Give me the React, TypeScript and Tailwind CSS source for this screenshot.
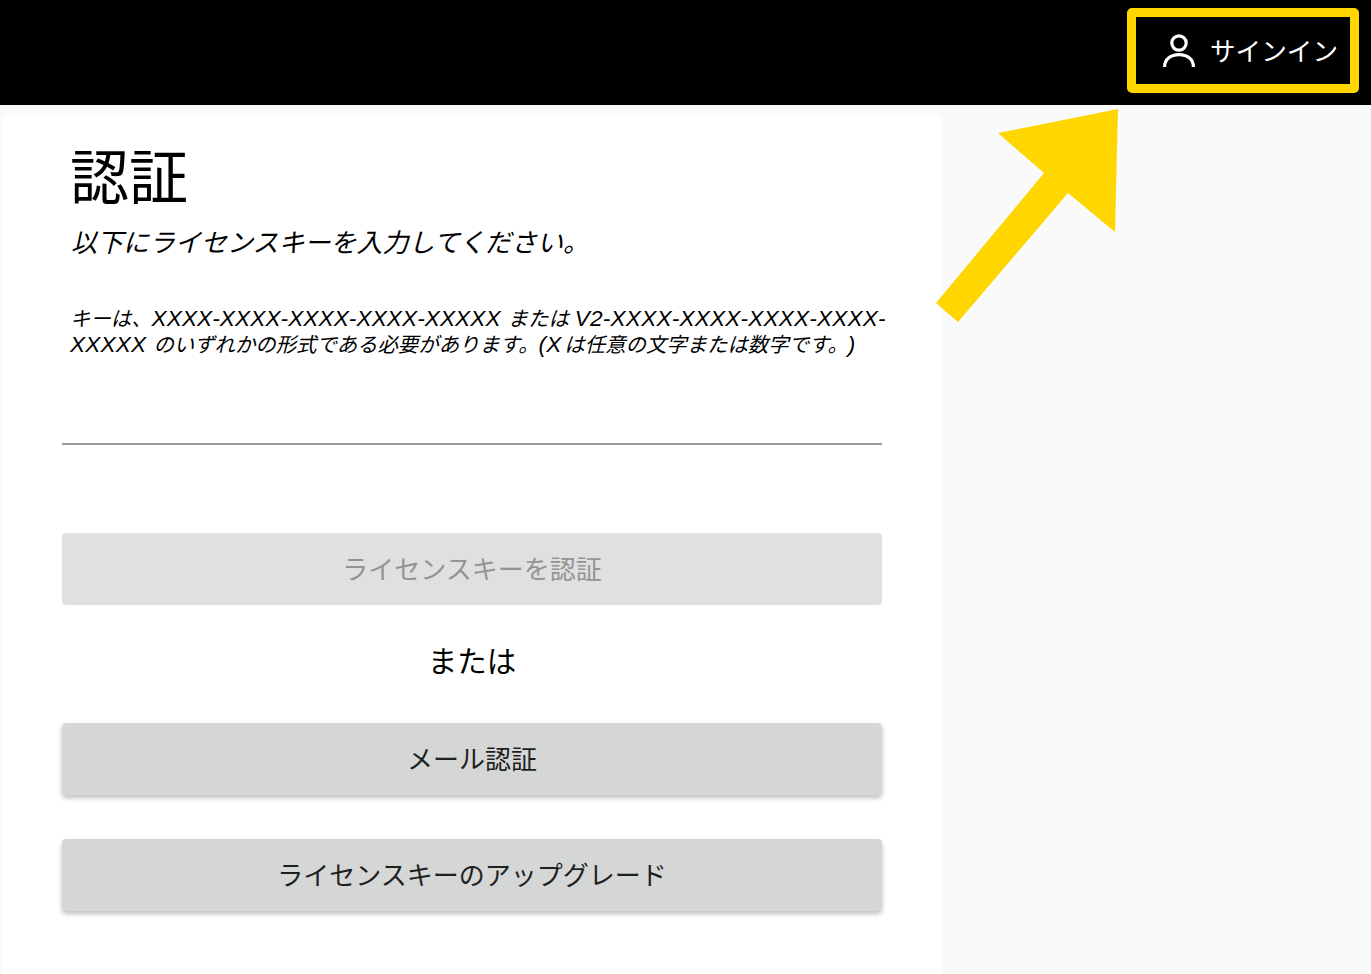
const font = "font-['Roboto','Noto_Sans_CJK_JP','Noto_Sans_CJK_SC',sans-serif]";
const latin = "font-['Liberation_Sans',sans-serif] text-[22.6px] tracking-[0.1px]";
const latinWide = "ml-[1px] font-['Liberation_Sans',sans-serif] text-[22.6px] tracking-[0.2px]";

function UserIcon() {
  return (
    <svg width="34" height="38" viewBox="0 0 34 38" fill="none" stroke="#ffffff" strokeWidth="3.2">
      <circle cx="17" cy="11" r="7.2" />
      <path d="M2.6 35 C2.6 27 9 22.6 17 22.6 C25 22.6 31.4 27 31.4 35" />
    </svg>
  );
}

function Arrow() {
  return (
    <svg className="absolute left-[930px] top-[105px]" width="200" height="225" viewBox="930 105 200 225">
      <polygon fill="#ffd600" points="1118,109 998,133 1044,173 936,303 958,322 1068,193 1115,232" />
    </svg>
  );
}

export default function App() {
  return (
    <div className={`${font} relative h-[974px] w-[1371px] overflow-hidden bg-[#fafafa] text-[#000000]`}>
      <header className="flex h-[105px] items-center justify-end bg-black pr-[12px]">
        <div className="mb-[4px] flex h-[85px] w-[232px] items-center rounded-[5px] border-[9px] border-[#ffd600] pl-[26px]">
          <UserIcon />
          <span className="ml-[14px] mt-[4px] whitespace-nowrap text-[25.6px] leading-none text-white">サインイン</span>
        </div>
      </header>
      <main className="ml-[2px] mt-[10px] h-[859px] w-[940px] bg-white pt-[32px]">
        <h1 className="pl-[68px] text-[59px] leading-[64px]">認証</h1>
        <p className="mt-[17px] pl-[69px] text-[26px] italic leading-[30px]">以下にライセンスキーを入力してください。</p>
        <p className="mt-[48px] w-[888px] pl-[68px] text-[20.4px] italic leading-[26px] [text-spacing-trim:space-all]">
          キーは、<span className={latin}>XXXX-XXXX-XXXX-XXXX-XXXXX</span> <span className="ml-[2px]">または</span> <span className={latinWide}>V2-XXXX-XXXX-XXXX-XXXX-XXXXX</span> <span className="ml-[2px]">のいずれかの形式である必要があります。</span><span className={latin}>(X</span><span className="ml-[3px]">は任意の文字または数字です。</span><span className={latin}>)</span>
        </p>
        <div className="ml-[60px] mt-[85px] w-[820px]">
          <div className="h-[2px] bg-[#9a9a9a]" />
          <button className="mt-[88px] flex h-[72px] w-full items-center justify-center rounded-[4px] bg-[#e0e0e0] pt-[2px] text-[26px] text-[#949494]">ライセンスキーを認証</button>
          <p className="mt-[38px] text-center text-[29.5px] leading-[38px]">または</p>
          <button className="mt-[42px] flex h-[72px] w-full items-center justify-center rounded-[4px] bg-[#d5d7d7] pt-[2px] text-[26px] text-[#1f1f1f] shadow-[0_3px_5px_rgba(0,0,0,0.25)]">メール認証</button>
          <button className="mt-[44px] flex h-[72px] w-full items-center justify-center rounded-[4px] bg-[#d5d7d7] pt-[2px] text-[26px] text-[#1f1f1f] shadow-[0_3px_5px_rgba(0,0,0,0.25)]">ライセンスキーのアップグレード</button>
        </div>
      </main>
      <Arrow />
    </div>
  );
}
